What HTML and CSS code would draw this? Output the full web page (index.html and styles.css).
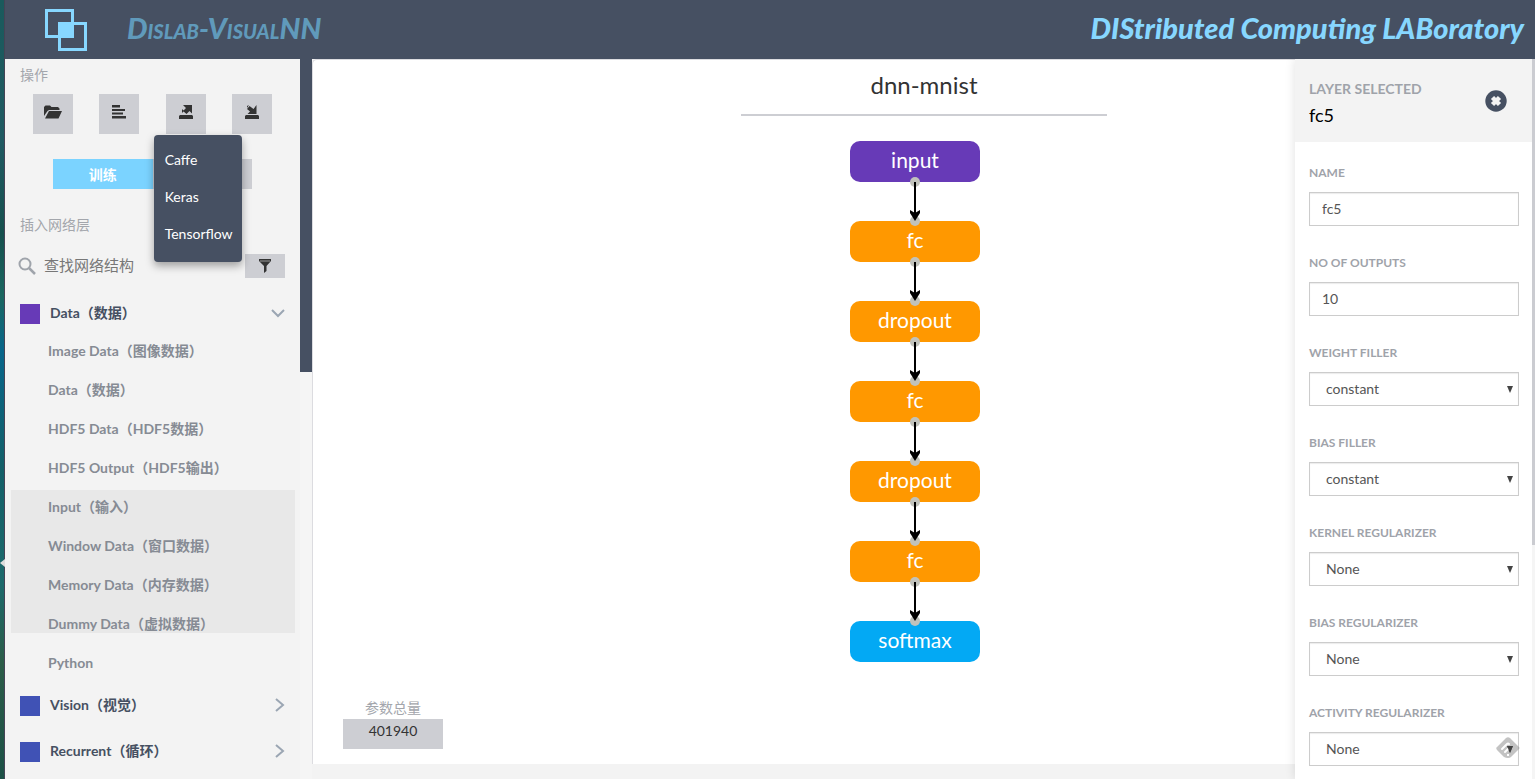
FILE: index.html
```html
<!DOCTYPE html>
<html lang="zh">
<head>
<meta charset="utf-8">
<title>Dislab-VisualNN</title>
<link rel="stylesheet" href="styles.css">
</head>
<body>
<div class="desktop-edge"><svg width="5" height="10" viewBox="0 0 5 10"><path d="M5 1v8L0 5z" fill="#ddd"/></svg></div>
<div class="app">
  <header class="topbar">
    <a class="brand" href="#">
      <svg class="logo" width="42" height="42" viewBox="0 0 42 42"><g fill="none" stroke="#87d7ff" stroke-width="3"><path d="M1.500 1.500h26v26h-26z"/><path d="M14.500 14.500h26v26h-26z"/></g><path d="M13 13h16v16H13z" fill="#87d7ff"/></svg>
      <span class="brand-name">Dislab-VisualNN</span>
    </a>
    <span class="lab-name">DIStributed Computing LABoratory</span>
  </header>
  <div class="body">
    <aside class="sidebar">
      <h2 class="section-title">操作</h2>
      <div class="tools">
        <button class="tool" aria-label="Open"><svg width="18" height="14" viewBox="0 0 18 14"><path fill="#333" d="M0 11V2l1.500-1.500H6L7.500 2H14l1.500 1.500V5H5L3.500 6zM5 6h13l-3.500 7.500H1z"/></svg></button>
        <button class="tool" aria-label="Text"><svg width="16" height="14" viewBox="0 0 16 14"><path fill="#333" d="M1 0h8v2.500H1zM1 4h13v2H1zM1 7.500h11v2H1zM1 11h14v2.500H1z"/></svg></button>
        <div class="tool-menu">
          <button class="tool" aria-label="Export"><svg width="14" height="14" viewBox="0 0 14 14"><path fill="#333" d="M1 10h12l1 1v3H0v-3zM4 0h9v8.500L10.500 6 7.500 9 4 6l3-3zM3 4l2 2-2 2z"/></svg></button>
          <div class="menu">
            <a href="#">Caffe</a><a href="#">Keras</a><a href="#">Tensorflow</a>
          </div>
        </div>
        <button class="tool" aria-label="Import"><svg width="14" height="14" viewBox="0 0 14 14"><path fill="#333" d="M1 10h12l1 1v3H0v-3zM11.500 0v9H2.500L5 6.500 2 4l2.500-3 4 3zM2 1l2-1-2 3z"/></svg></button>
      </div>
      <div class="modes"><button class="mode mode-on">训练</button><button class="mode">测试</button></div>
      <h2 class="section-title">插入网络层</h2>
      <div class="search">
        <svg width="18" height="18" viewBox="0 0 18 18"><g fill="none" stroke="#9fa4ab" stroke-width="2"><circle cx="7" cy="7" r="5.500"/><path d="M11 11l6 6" stroke-width="2.500"/></g></svg>
        <input class="search-input" type="text" placeholder="查找网络结构" aria-label="查找网络结构">
        <button class="filter" aria-label="Filter"><svg width="12" height="14" viewBox="0 0 12 14"><path fill="#333" d="M0 0h12v2L7.500 7v5L5 14V7L0 2z"/><path d="M1 2h10" stroke="#999"/></svg></button>
      </div>
      <nav class="layers">
        <a class="group" href="#"><span class="swatch swatch-data"></span><span class="group-name">Data（数据）</span><svg width="14" height="9" viewBox="0 0 14 9"><path d="M1 1l6 6 6-6" fill="none" stroke="#9ba6b3" stroke-width="2"/></svg></a>
        <div class="items">
          <a href="#">Image Data（图像数据）</a>
          <a href="#">Data（数据）</a>
          <a href="#">HDF5 Data（HDF5数据）</a>
          <a href="#">HDF5 Output（HDF5输出）</a>
          <div class="shaded">
            <a href="#">Input（输入）</a>
            <a href="#">Window Data（窗口数据）</a>
            <a href="#">Memory Data（内存数据）</a>
            <a href="#">Dummy Data（虚拟数据）</a>
          </div>
          <a href="#">Python</a>
        </div>
        <a class="group" href="#"><span class="swatch"></span><span class="group-name">Vision（视觉）</span><svg width="10" height="14" viewBox="0 0 10 14"><path d="M1 1l7 6-7 6" fill="none" stroke="#9ba6b3" stroke-width="2"/></svg></a>
        <a class="group" href="#"><span class="swatch"></span><span class="group-name">Recurrent（循环）</span><svg width="10" height="14" viewBox="0 0 10 14"><path d="M1 1l7 6-7 6" fill="none" stroke="#9ba6b3" stroke-width="2"/></svg></a>
      </nav>
    </aside>
    <div class="side-scroll"><div class="side-thumb"></div></div>
    <div class="workspace">
      <main class="canvas">
        <h1 class="net-name">dnn-mnist</h1>
        <div class="graph">
          <div class="node n1 data">input</div>
          <div class="node n2">fc</div>
          <div class="node n3">dropout</div>
          <div class="node n4">fc</div>
          <div class="node n5">dropout</div>
          <div class="node n6">fc</div>
          <div class="node n7 loss">softmax</div>
          <svg class="edges" width="130" height="521" viewBox="0 0 130 521">
            <defs><g id="edge"><circle cx="65" cy="41" r="5" fill="#c1c2bc"/><circle cx="65" cy="80" r="5" fill="#c1c2bc"/><path d="M64 41h2v31h-2z"/><path d="M60 69l5 3 5-3v3l-5 8-5-8z"/></g></defs>
            <use href="#edge"/><use href="#edge" y="80"/><use href="#edge" y="160"/><use href="#edge" y="240"/><use href="#edge" y="320"/><use href="#edge" y="400"/>
          </svg>
        </div>
        <div class="params"><span class="params-label">参数总量</span><span class="params-value">401940</span></div>
      </main>
      <section class="panel">
        <form class="panel-main">
          <div class="panel-head">
            <div class="panel-text"><div class="panel-kicker">LAYER SELECTED</div><div class="panel-title">fc5</div></div>
            <button class="close" type="button" aria-label="Close"><svg width="22" height="22" viewBox="0 0 22 22"><circle cx="11" cy="11" r="10.700" fill="#465062"/><path d="M7.500 7.500l7 7M14.500 7.500l-7 7" stroke="#f3f3f3" stroke-width="4.500"/></svg></button>
          </div>
          <div class="fields">
            <div class="field"><label for="f1">NAME</label><input id="f1" class="control" type="text" value="fc5"></div>
            <div class="field"><label for="f2">NO OF OUTPUTS</label><input id="f2" class="control" type="text" value="10"></div>
            <div class="field"><label for="f3">WEIGHT FILLER</label><div class="pick"><select id="f3" class="control"><option>constant</option></select><svg width="6" height="7" viewBox="0 0 6 7"><path d="M0 0h6L3 7z" fill="#444"/></svg></div></div>
            <div class="field"><label for="f4">BIAS FILLER</label><div class="pick"><select id="f4" class="control"><option>constant</option></select><svg width="6" height="7" viewBox="0 0 6 7"><path d="M0 0h6L3 7z" fill="#444"/></svg></div></div>
            <div class="field"><label for="f5">KERNEL REGULARIZER</label><div class="pick"><select id="f5" class="control"><option>None</option></select><svg width="6" height="7" viewBox="0 0 6 7"><path d="M0 0h6L3 7z" fill="#444"/></svg></div></div>
            <div class="field"><label for="f6">BIAS REGULARIZER</label><div class="pick"><select id="f6" class="control"><option>None</option></select><svg width="6" height="7" viewBox="0 0 6 7"><path d="M0 0h6L3 7z" fill="#444"/></svg></div></div>
            <div class="field"><label for="f7">ACTIVITY REGULARIZER</label><div class="pick"><select id="f7" class="control"><option>None</option></select><svg width="6" height="7" viewBox="0 0 6 7"><path d="M0 0h6L3 7z" fill="#444"/></svg></div></div>
          </div>
        </form>
        <div class="panel-scroll"><div class="panel-thumb"></div></div>
      </section>
    </div>
  </div>
</div>
<svg class="badge" width="24" height="22" viewBox="0 0 24 22"><path d="M10 1q2-1.500 4 0l9 9q1 1 0 2l-8 8q-1 1-3 1t-4-1l-7-7q-1.500-2 0-3z" fill="#888" fill-opacity=".5"/><path d="M6 12l5-5q1-1 2 0M9 15l3-3" fill="none" stroke="#fff" stroke-width="2" stroke-linecap="round"/><path d="M11 17h2v2h-2z" fill="#fff"/><path d="M11 9h6l-3 7z" fill="#444"/></svg>
</body>
</html>
```
FILE: styles.css
```css
* { box-sizing: border-box; }
body {
  margin: 0;
  height: 100vh;
  overflow: hidden;
  display: flex;
  font-family: Lato, "Noto Sans CJK SC", sans-serif;
  font-size: 14px;
  color: #333;
}
a { color: inherit; text-decoration: none; }
button { border: 0; padding: 0; font: inherit; color: inherit; }
h1, h2 { margin: 0; font-weight: 400; }
svg { display: block; flex: none; }

.desktop-edge {
  width: 5px;
  flex: none;
  display: flex;
  align-items: center;
  padding-top: 347px;
  border-right: 1px solid #445;
  background: linear-gradient(#1a5a5c, #205a62 18%, #16504e 30%, #1a6660 38%, #07658a 45%, #135f68 60%, #1d6a6c 75%, #2c5c48 85%, #1c5046);
}
.app { flex: 1; min-width: 0; display: flex; flex-direction: column; }

.topbar {
  flex: none;
  height: 59px;
  padding: 0 11px 0 40px;
  display: flex;
  align-items: center;
  justify-content: space-between;
  background: #465062;
  font-weight: 900;
  font-style: italic;
  font-size: 29px;
  line-height: 36px;
}
.brand { display: flex; align-items: center; gap: 40px; }
.brand-name { font-variant: small-caps; color: #609abb; padding-bottom: 4px; }
.lab-name { color: #87d7ff; padding-bottom: 4px; }

.body { flex: 1; min-height: 0; display: flex; background: #f3f3f3; }

.sidebar { width: 295px; flex: none; overflow: hidden; padding: 6px 15px 0; }
.section-title { font-size: 14px; line-height: 20px; color: #a3a6ac; }
.tools { display: grid; grid-template-columns: repeat(4, 1fr); justify-items: center; padding-top: 9px; }
.tool { width: 40px; height: 40px; padding-bottom: 4px; display: grid; place-items: center; background: #cdced3; }
.tool-menu { position: relative; }
.menu {
  position: absolute;
  top: 41px;
  left: -12px;
  z-index: 2;
  width: 88px;
  padding: 7px 0 9px;
  border-radius: 4px;
  background: #465062;
  box-shadow: 0 4px 8px rgba(0, 0, 0, .35);
  color: #fff;
  font-size: 14px;
}
.menu a { display: block; height: 37px; padding: 0 11px; line-height: 35px; }
.modes { display: flex; padding: 25px 33px 26px; }
.mode { flex: 1; height: 30px; background: #cdced3; color: #fff; font-weight: 700; }
.mode-on { background: #7bd3ff; }

.search { display: flex; align-items: center; height: 30px; margin: 16px 0 0 -2px; }
.search-input {
  flex: 1;
  min-width: 0;
  padding: 0 8px 2px;
  border: 0;
  background: none;
  font: 15px/24px Lato, "Noto Sans CJK SC", sans-serif;
}
.search-input::placeholder { color: #777; }
.filter { width: 40px; height: 24px; display: grid; place-items: center; background: #cdced3; }

.layers { padding-top: 10px; font-weight: 700; }
.group { display: flex; align-items: center; gap: 10px; height: 46px; color: #465062; }
.group-name { flex: 1; line-height: 20px; padding-bottom: 2px; }
.group svg { margin-bottom: 2px; }
.swatch { width: 20px; height: 20px; background: #4052b5; }
.swatch-data { background: #673ab7; }
.items { margin: -5px -10px 0 -9px; color: #868b94; line-height: 37px; }
.items a { display: block; height: 39px; padding-left: 37px; }
.shaded { height: 156px; background: linear-gradient(#e8e8e8, #e8e8e8) 0 2px / 100% 143px no-repeat; }

.side-scroll { width: 12px; flex: none; background: #f5f5f5; }
.side-thumb { height: 313px; background: #465062; }

.workspace { flex: 1; min-width: 0; display: grid; grid-template: minmax(0, 1fr) / minmax(0, 1fr); }
.canvas {
  grid-area: 1 / 1;
  margin-bottom: 15px;
  border: 1px solid #dcdce0;
  border-width: 1px 0 0 1px;
  border-top-left-radius: 5px;
  background: #fff;
  display: flex;
  flex-direction: column;
  justify-content: space-between;
  position: relative;
}
.net-name {
  width: 30%;
  margin-left: 35%;
  padding: 9px 0 13px;
  border-bottom: 2px solid #cdced3;
  text-align: center;
  font-size: 24px;
  line-height: 32px;
}
.graph { position: absolute; left: 537px; top: 81px; width: 130px; }
.node {
  position: absolute;
  width: 130px;
  height: 41px;
  border-radius: 10px;
  background: #ff9800;
  color: #fff;
  text-align: center;
  font-size: 21px;
  line-height: 37px;
}
.data { background: #673ab7; }
.loss { background: #03a9f4; }
.n1 { top: 0; }
.n2 { top: 80px; }
.n3 { top: 160px; }
.n4 { top: 240px; }
.n5 { top: 320px; }
.n6 { top: 400px; }
.n7 { top: 480px; }
.edges { position: absolute; }
.params { width: 100px; margin: 0 0 15px 30px; text-align: center; }
.params-label, .params-value { display: block; }
.params-label { color: #a3a6ac; height: 21px; line-height: 20px; }
.params-value { height: 30px; line-height: 23px; background: #cdced3; }

.panel {
  grid-area: 1 / 1;
  justify-self: end;
  width: 240px;
  display: flex;
  z-index: 1;
  overflow: hidden;
  background: #fff;
  box-shadow: 0 0 10px rgba(0, 0, 0, .12);
  clip-path: inset(0 0 0 -12px);
}
.panel-main { flex: 1; min-width: 0; }
.panel-head { display: flex; align-items: center; justify-content: space-between; height: 83px; padding: 0 25px 0 14px; background: #f3f3f3; }
.panel-text { padding-top: 6px; }
.panel-kicker { font-size: 14px; font-weight: 700; line-height: 22px; color: #9fa3aa; }
.panel-title { font-size: 18px; line-height: 30px; color: #000; }
.close { background: none; }
.fields { padding: 21px 13px 0 14px; }
.field { height: 90px; }
.field label { display: block; height: 29px; line-height: 20px; font-size: 12px; font-weight: 700; color: #9fa3aa; }
.control {
  display: block;
  width: 100%;
  height: 34px;
  padding: 0 12px 2px;
  border: 1px solid #ccc;
  border-radius: 0;
  background: #fff;
  box-shadow: inset 0 1px 1px rgba(0, 0, 0, .08);
  color: #555;
  font: 14px Lato, "Noto Sans CJK SC", sans-serif;
}
.pick { display: grid; align-items: center; }
.pick > * { grid-area: 1 / 1; }
.pick svg { justify-self: end; margin-right: 6px; pointer-events: none; }
select.control { appearance: none; padding: 0 16px 2px; }
.panel-scroll { width: 3px; background: #f5f5f5; }
.panel-thumb { height: 486px; background: #cbccd1; }
.badge { position: fixed; right: 15px; bottom: 20px; z-index: 3; }
```
